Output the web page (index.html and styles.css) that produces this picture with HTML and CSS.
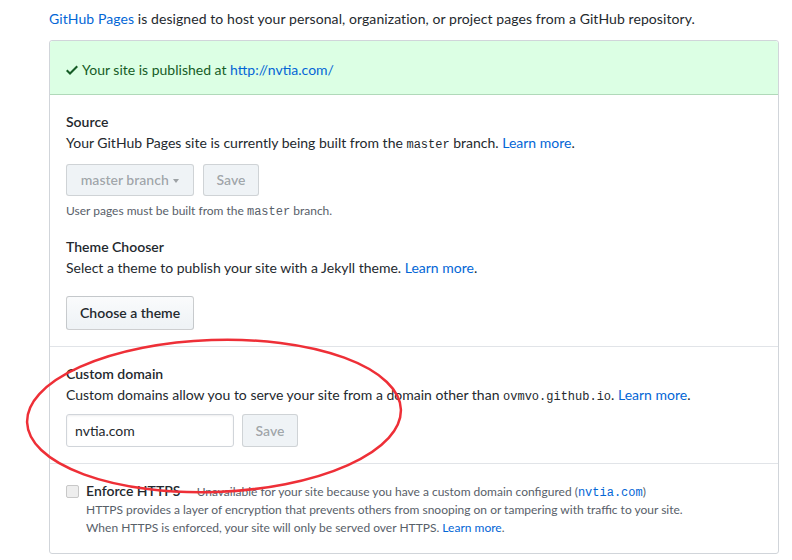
FILE: index.html
```html
<!DOCTYPE html>
<html>
<head>
<meta charset="utf-8">
<link rel="stylesheet" href="styles.css">
</head>
<body>
<div class="page">
  <p class="intro"><a href="#">GitHub Pages</a> is designed to host your personal, organization, or project pages from a GitHub repository.</p>
  <div class="box">
    <div class="flash">
      <svg class="check" width="12" height="16" viewBox="0 0 12 16"><path fill-rule="evenodd" d="M12 5l-8 8-4-4 1.5-1.5L4 10l6.5-6.5L12 5z" fill="#165c26"/></svg>
      <span>Your site is published at <a href="#">http://nvtia.com/</a></span>
    </div>
    <div class="section">
      <h3>Source</h3>
      <p class="desc">Your GitHub Pages site is currently being built from the <code>master</code> branch. <a href="#">Learn more</a>.</p>
      <div class="row">
        <button class="btn disabled branch">master branch <span class="caret"></span></button>
        <button class="btn disabled save">Save</button>
      </div>
      <p class="note">User pages must be built from the <code>master</code> branch.</p>
      <h3 class="second">Theme Chooser</h3>
      <p class="desc wide">Select a theme to publish your site with a Jekyll theme. <a href="#">Learn more</a>.</p>
      <div class="row">
        <button class="btn theme">Choose a theme</button>
      </div>
    </div>
    <div class="section">
      <h3>Custom domain</h3>
      <p class="desc tight">Custom domains allow you to serve your site from a domain other than <code>ovmvo.github.io</code>. <a href="#">Learn more</a>.</p>
      <div class="row">
        <input class="field" type="text" value="nvtia.com">
        <button class="btn disabled save small">Save</button>
      </div>
    </div>
    <div class="section last">
      <div class="https">
        <span class="cb"></span>
        <div class="https-text">
          <div class="https-line"><strong>Enforce HTTPS</strong> <span class="muted">— Unavailable for your site because you have a custom domain configured (<a href="#" class="mono">nvtia.com</a>)</span></div>
          <p class="muted">HTTPS provides a layer of encryption that prevents others from snooping on or tampering with traffic to your site.<br>When HTTPS is enforced, your site will only be served over HTTPS. <a href="#">Learn more</a>.</p>
        </div>
      </div>
    </div>
  </div>
  <svg class="ellipse" width="792" height="560" viewBox="0 0 792 560"><ellipse cx="214" cy="416" rx="187" ry="76" transform="rotate(-2 214 416)" fill="none" stroke="#ee2f37" stroke-width="2.5"/></svg>
</div>
</body>
</html>
```
FILE: styles.css
```css
* { box-sizing: border-box; }
body {
  margin: 0;
  font-family: "Lato", "Noto Sans", sans-serif;
  font-size: 14px;
  line-height: 1.5;
  color: #24292e;
  background: #fff;
}
a { color: #0366d6; text-decoration: none; }
.page { padding: 8px 14px 0 49px; position: relative; }
.intro { margin: 0 0 11px; line-height: 21px; letter-spacing: 0.08px; }
.box {
  width: 730px;
  border: 1px solid #d1d5da;
  border-radius: 3px;
}
.flash {
  display: flex;
  align-items: center;
  gap: 4px;
  padding: 18px 16px 14px;
  line-height: 21px;
  background: #dcffe4;
  border-bottom: 1px solid #b0d9b9;
  color: #165c26;
  border-radius: 3px 3px 0 0;
}
.check { display: block; }
.section {
  padding: 16px;
  border-bottom: 1px solid #e1e4e8;
}
.section.last { border-bottom: 0; }
h3 {
  margin: 0;
  font-size: 14px;
  font-weight: 600;
  line-height: 21px;
}
h3.second { margin-top: 16px; }
.desc { margin: 0 0 11px; line-height: 21px; }
.desc.wide { margin-bottom: 18px; }
.desc.tight { margin-bottom: 9px; }
code, .mono {
  font-family: "Liberation Mono", "DejaVu Sans Mono", monospace;
  font-size: 12px;
  line-height: 1;
}
.row { display: flex; gap: 8px; align-items: center; }
.btn {
  font-family: inherit;
  font-size: 14px;
  font-weight: 600;
  line-height: 20px;
  height: 32px;
  padding: 5px 12px;
  color: #24292e;
  background: linear-gradient(#fafbfc, #eff3f6 90%);
  border: 1px solid rgba(27,31,35,0.2);
  border-radius: 3px;
}
.btn.theme { height: 34px; padding: 6px 13px; }
.btn.disabled {
  color: rgba(36,41,46,0.4);
  background: #eff3f6;
  border-color: rgba(27,31,35,0.15);
}
.btn.branch { width: 128px; margin-right: 1px; }
.btn.save { width: 56px; padding: 5px 0; }
.btn.small { height: 33px; }
.caret {
  display: inline-block;
  width: 0; height: 0;
  vertical-align: middle;
  border-top: 4px solid;
  border-left: 3.5px solid transparent;
  border-right: 3.5px solid transparent;
  margin-left: 1px;
}
.note {
  margin: 6px 0 0;
  font-size: 12px;
  line-height: 18px;
  color: #586069;
}
.field {
  width: 168px;
  height: 33px;
  padding: 6px 8px;
  font-family: inherit;
  font-size: 14px;
  color: #24292e;
  border: 1px solid #d1d5da;
  border-radius: 3px;
  box-shadow: inset 0 1px 2px rgba(27,31,35,0.075);
}
.https { display: flex; gap: 7px; }
.cb {
  flex: none;
  width: 13px; height: 13px;
  margin-top: 5px;
  border: 1px solid #c8c8c8;
  border-radius: 2px;
  background: #eee;
}
.https-line { height: 21px; line-height: 21px; }
.https-line strong { font-weight: 600; }
.https-line .muted { line-height: 1; }
.muted { color: #586069; font-size: 12px; }
.https-text p { margin: 0; line-height: 18px; }
.ellipse { position: absolute; left: 0; top: 0; pointer-events: none; }
```
